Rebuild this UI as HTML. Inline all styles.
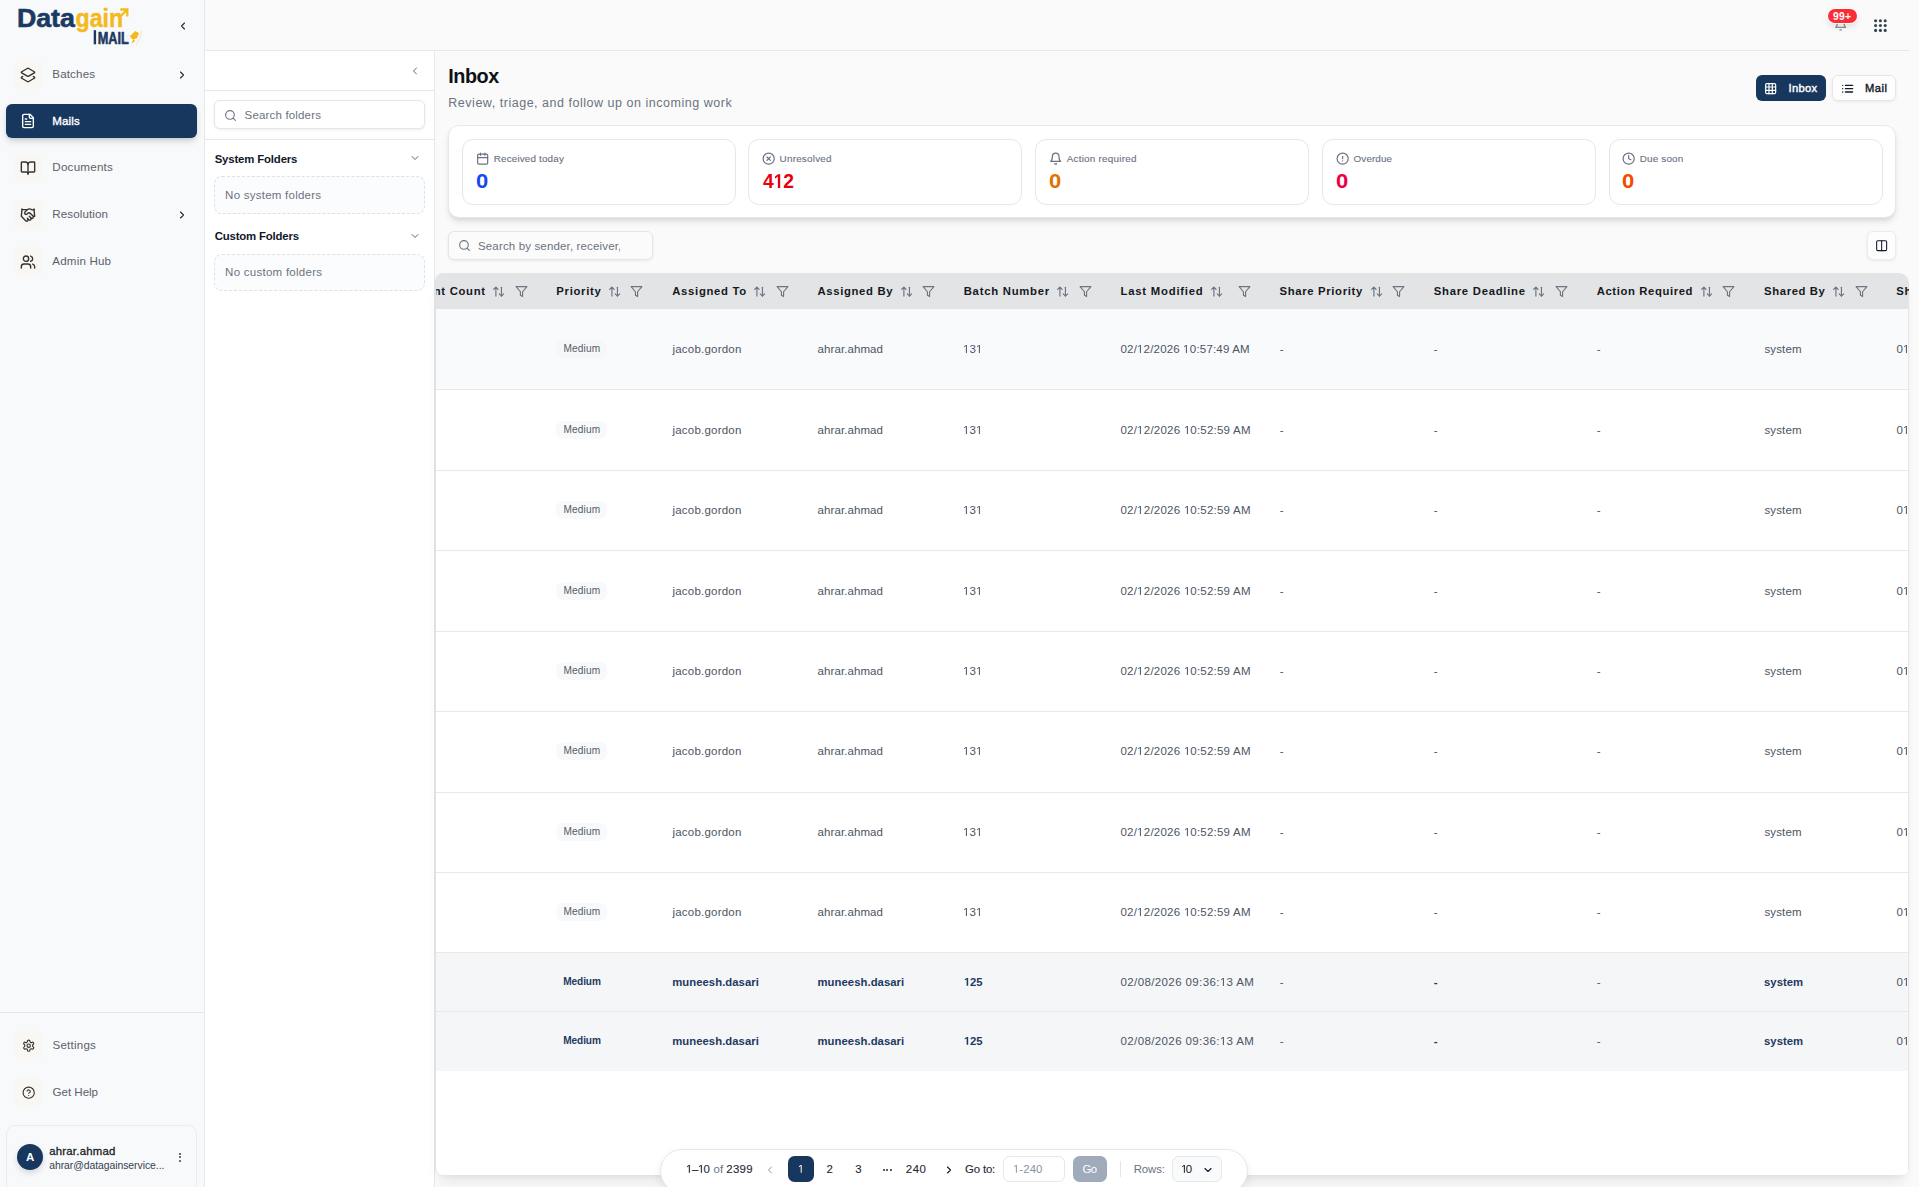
<!DOCTYPE html>
<html lang="en"><head><meta charset="utf-8"><title>Inbox - Datagain IMAIL</title>
<style>
html,body{margin:0;padding:0;}
body{width:1919px;height:1187px;overflow:hidden;position:relative;background:#fafafa;font-family:"Liberation Sans",sans-serif;}
.b,.t,.i{position:absolute;box-sizing:border-box;}
.t{white-space:nowrap;display:block;}
.i{display:block;overflow:visible;}
</style></head><body>
<div class="b" style="left:0.00px;top:0.00px;width:1919.00px;height:1187.00px;background:#fafafa;"></div>
<div class="b" style="left:205.00px;top:50.00px;width:1704.00px;height:1.00px;background:#e7e7e8;"></div>
<div class="b" style="left:0.00px;top:0.00px;width:204.00px;height:1187.00px;background:#f8f9fb;border-right:1px solid #e7e7e7;box-sizing:content-box;"></div>
<div class="b" style="left:205.00px;top:51.00px;width:229.00px;height:1136.00px;background:#fff;border-right:1px solid #e7e7e7;box-sizing:content-box;"></div>
<svg class="i" style="left:14px;top:4px" width="134" height="44" viewBox="14 4 134 44">
<g font-family="Liberation Sans, sans-serif" font-weight="700" stroke-linejoin="round">
<text x="16.9" y="26.7" font-size="25.6" fill="#1b3a63" stroke="#1b3a63" stroke-width=".6" textLength="58" lengthAdjust="spacingAndGlyphs">Data</text>
<text x="75.6" y="26.7" font-size="25.6" fill="#f5b91e" stroke="#f5b91e" stroke-width=".45" textLength="47.6" lengthAdjust="spacingAndGlyphs">gain</text>
<rect x="93.7" y="30.2" width="2.4" height="14.1" fill="#1b3a63"/>
<text x="97.7" y="44.3" font-size="17" fill="#1b3a63" stroke="#1b3a63" stroke-width=".6" textLength="31.1" lengthAdjust="spacingAndGlyphs">MAIL</text>
</g>
<path d="M120.3 9.5h7v7M127 9.8l-6.4 6.4" stroke="#f5b91e" stroke-width="2.3" fill="none"/>
<path d="M129.9 36.2l5.4-5.3 3.8 2.4-2.2 5-3.2 1 1.4 1.6-3.6 2.9 1.6-4.4-1.2-.6z" fill="#f2b81c"/>
<path d="M141.8 31.3l-2 7.2-3.6 6" stroke="#f5c84e" stroke-width=".6" fill="none" opacity=".7"/>
<path d="M126.6 36.4l2.6-.9M127.6 39.2l1.8-.4" stroke="#f5c84e" stroke-width=".6" fill="none" opacity=".6"/>
</svg>
<svg class="i" style="left:177.00px;top:19.60px;" width="12" height="12" viewBox="0 0 24 24" fill="none" stroke="#1f2937" stroke-width="2.2" stroke-linecap="round" stroke-linejoin="round"><path d="m15 18-6-6 6-6"/></svg>
<div class="b" style="left:14.00px;top:59.90px;width:29.00px;height:29.00px;background:#f9f7f3;border-radius:6.5px;"></div>
<svg class="i" style="left:20.00px;top:66.70px;" width="16" height="16" viewBox="0 0 24 24" fill="none" stroke="#333" stroke-width="2.1" stroke-linecap="round" stroke-linejoin="round"><path d="m20 14.285 1.5.845a1 1 0 0 1 0 1.74L13 21.74a2 2 0 0 1-2 0l-8.5-4.87a1 1 0 0 1 0-1.74l1.5-.845"/><path d="M13 13.74a2 2 0 0 1-2 0L2.5 8.87a1 1 0 0 1 0-1.74L11 2.26a2 2 0 0 1 2 0l8.5 4.87a1 1 0 0 1 0 1.74Z"/></svg>
<span class="t" style="left:52.30px;top:66.00px;font-size:11.6px;line-height:16px;color:#5b616b;letter-spacing:0.141px;">Batches</span>
<svg class="i" style="left:176.30px;top:68.70px;" width="12" height="12" viewBox="0 0 24 24" fill="none" stroke="#1f2937" stroke-width="2.2" stroke-linecap="round" stroke-linejoin="round"><path d="m9 18 6-6-6-6"/></svg>
<div class="b" style="left:6.00px;top:104.00px;width:191.00px;height:34.00px;background:#17375e;border-radius:6px;box-shadow:0 4px 7px -1px rgba(0,0,0,.16),0 2px 4px -2px rgba(0,0,0,.1);"></div>
<svg class="i" style="left:20.00px;top:113.20px;" width="16" height="16" viewBox="0 0 24 24" fill="none" stroke="#fff" stroke-width="2.1" stroke-linecap="round" stroke-linejoin="round"><path d="M15 2H6a2 2 0 0 0-2 2v16a2 2 0 0 0 2 2h12a2 2 0 0 0 2-2V7Z"/><path d="M14 2v4a2 2 0 0 0 2 2h4"/><path d="M10 9H8"/><path d="M16 13H8"/><path d="M16 17H8"/></svg>
<span class="t" style="left:52.30px;top:113.00px;font-size:11.5px;line-height:16px;color:#fff;letter-spacing:0.132px;-webkit-text-stroke:0.38px #fff;">Mails</span>
<div class="b" style="left:14.00px;top:154.10px;width:29.00px;height:28.00px;background:#f9f7f3;border-radius:6.5px;"></div>
<svg class="i" style="left:20.00px;top:159.90px;" width="16" height="16" viewBox="0 0 24 24" fill="none" stroke="#333" stroke-width="2.1" stroke-linecap="round" stroke-linejoin="round"><path d="M12 7v14"/><path d="M3 18a1 1 0 0 1-1-1V4a1 1 0 0 1 1-1h5a4 4 0 0 1 4 4 4 4 0 0 1 4-4h5a1 1 0 0 1 1 1v13a1 1 0 0 1-1 1h-6a3 3 0 0 0-3 3 3 3 0 0 0-3-3z"/></svg>
<span class="t" style="left:52.30px;top:159.00px;font-size:11.6px;line-height:16px;color:#5b616b;letter-spacing:0.242px;">Documents</span>
<div class="b" style="left:14.00px;top:199.90px;width:29.00px;height:29.00px;background:#f9f7f3;border-radius:6.5px;"></div>
<svg class="i" style="left:20.00px;top:206.70px;" width="16" height="16" viewBox="0 0 24 24" fill="none" stroke="#333" stroke-width="2.1" stroke-linecap="round" stroke-linejoin="round"><path d="m11 17 2 2a1 1 0 1 0 3-3"/><path d="m14 14 2.5 2.5a1 1 0 1 0 3-3l-3.88-3.88a3 3 0 0 0-4.24 0l-.88.88a1 1 0 1 1-3-3l2.81-2.81a5.79 5.79 0 0 1 7.06-.87l.47.28a2 2 0 0 0 1.42.25L21 4"/><path d="m21 3 1 11h-2"/><path d="M3 3 2 14l6.5 6.5a1 1 0 1 0 3-3"/><path d="M3 4h8"/></svg>
<span class="t" style="left:52.30px;top:206.00px;font-size:11.6px;line-height:16px;color:#5b616b;letter-spacing:0.088px;">Resolution</span>
<svg class="i" style="left:176.30px;top:208.70px;" width="12" height="12" viewBox="0 0 24 24" fill="none" stroke="#1f2937" stroke-width="2.2" stroke-linecap="round" stroke-linejoin="round"><path d="m9 18 6-6-6-6"/></svg>
<div class="b" style="left:14.00px;top:246.50px;width:29.00px;height:29.00px;background:#f9f7f3;border-radius:6.5px;"></div>
<svg class="i" style="left:20.00px;top:254.30px;" width="16" height="16" viewBox="0 0 24 24" fill="none" stroke="#333" stroke-width="2.1" stroke-linecap="round" stroke-linejoin="round"><path d="M16 21v-2a4 4 0 0 0-4-4H6a4 4 0 0 0-4 4v2"/><circle cx="9" cy="7" r="4"/><path d="M22 21v-2a4 4 0 0 0-3-3.87"/><path d="M16 3.13a4 4 0 0 1 0 7.75"/></svg>
<span class="t" style="left:52.30px;top:253.00px;font-size:11.6px;line-height:16px;color:#5b616b;letter-spacing:0.170px;">Admin Hub</span>
<div class="b" style="left:0.00px;top:1012.00px;width:204.00px;height:1.00px;background:#e7e7e8;"></div>
<div class="b" style="left:14.00px;top:1030.80px;width:29.00px;height:29.00px;background:#f9f7f3;border-radius:6.5px;"></div>
<svg class="i" style="left:21.60px;top:1038.80px;" width="13.4" height="13.4" viewBox="0 0 24 24" fill="none" stroke="#333" stroke-width="2.0" stroke-linecap="round" stroke-linejoin="round"><path d="M12.22 2h-.44a2 2 0 0 0-2 2v.18a2 2 0 0 1-1 1.73l-.43.25a2 2 0 0 1-2 0l-.15-.08a2 2 0 0 0-2.73.73l-.22.38a2 2 0 0 0 .73 2.73l.15.1a2 2 0 0 1 1 1.72v.51a2 2 0 0 1-1 1.74l-.15.09a2 2 0 0 0-.73 2.73l.22.38a2 2 0 0 0 2.73.73l.15-.08a2 2 0 0 1 2 0l.43.25a2 2 0 0 1 1 1.73V20a2 2 0 0 0 2 2h.44a2 2 0 0 0 2-2v-.18a2 2 0 0 1 1-1.73l.43-.25a2 2 0 0 1 2 0l.15.08a2 2 0 0 0 2.73-.73l.22-.39a2 2 0 0 0-.73-2.73l-.15-.08a2 2 0 0 1-1-1.74v-.5a2 2 0 0 1 1-1.74l.15-.09a2 2 0 0 0 .73-2.73l-.22-.38a2 2 0 0 0-2.73-.73l-.15.08a2 2 0 0 1-2 0l-.43-.25a2 2 0 0 1-1-1.73V4a2 2 0 0 0-2-2z"/><circle cx="12" cy="12" r="3"/></svg>
<span class="t" style="left:52.50px;top:1037.00px;font-size:11.6px;line-height:16px;color:#5b616b;letter-spacing:0.214px;">Settings</span>
<div class="b" style="left:14.00px;top:1077.80px;width:29.00px;height:29.00px;background:#f9f7f3;border-radius:6.5px;"></div>
<svg class="i" style="left:21.60px;top:1085.80px;" width="13.4" height="13.4" viewBox="0 0 24 24" fill="none" stroke="#333" stroke-width="2.0" stroke-linecap="round" stroke-linejoin="round"><circle cx="12" cy="12" r="10"/><path d="M9.09 9a3 3 0 0 1 5.83 1c0 2-3 3-3 3"/><path d="M12 17h.01"/></svg>
<span class="t" style="left:52.50px;top:1084.00px;font-size:11.6px;line-height:16px;color:#5b616b;letter-spacing:-0.027px;">Get Help</span>
<div class="b" style="left:6.30px;top:1125.30px;width:190.30px;height:80.00px;border:1px solid #ececee;border-radius:9px;"></div>
<div class="b" style="left:16.90px;top:1143.90px;width:26.50px;height:26.50px;background:#17375e;border-radius:50%;box-shadow:0 3px 6px rgba(0,0,0,.14);"></div>
<span class="t" style="left:30.15px;top:1149.00px;font-size:11.5px;line-height:16px;color:#fff;font-weight:700;transform:translateX(-50%);">A</span>
<span class="t" style="left:49.20px;top:1143.00px;font-size:11.4px;line-height:16px;color:#1a1d23;letter-spacing:0.219px;-webkit-text-stroke:0.3px #1a1d23;">ahrar.ahmad</span>
<span class="t" style="left:49.20px;top:1157.00px;font-size:10.4px;line-height:17px;color:#374151;letter-spacing:-0.046px;">ahrar@datagainservice...</span>
<div class="b" style="left:179.35px;top:1152.55px;width:2.10px;height:2.10px;background:#404040;border-radius:50%;"></div>
<div class="b" style="left:179.35px;top:1156.35px;width:2.10px;height:2.10px;background:#404040;border-radius:50%;"></div>
<div class="b" style="left:179.35px;top:1160.15px;width:2.10px;height:2.10px;background:#404040;border-radius:50%;"></div>
<div class="b" style="left:205.00px;top:90.00px;width:229.00px;height:1.00px;background:#e7e7e8;"></div>
<svg class="i" style="left:409.00px;top:64.90px;" width="12" height="12" viewBox="0 0 24 24" fill="none" stroke="#4b5563" stroke-width="1.8" stroke-linecap="round" stroke-linejoin="round"><path d="m15 18-6-6 6-6"/></svg>
<div class="b" style="left:214.40px;top:100.20px;width:210.30px;height:28.80px;background:#fff;border:1px solid #e6e6e7;border-radius:6px;box-shadow:0 1px 3px rgba(0,0,0,.07);"></div>
<svg class="i" style="left:224.00px;top:108.70px;" width="13" height="13" viewBox="0 0 24 24" fill="none" stroke="#6a7282" stroke-width="2.0" stroke-linecap="round" stroke-linejoin="round"><circle cx="11" cy="11" r="8"/><path d="m21 21-4.3-4.3"/></svg>
<span class="t" style="left:244.60px;top:107.00px;font-size:11.5px;line-height:16px;color:#6b7280;letter-spacing:0.166px;">Search folders</span>
<div class="b" style="left:205.00px;top:139.00px;width:229.00px;height:1.00px;background:#e7e7e8;"></div>
<span class="t" style="left:214.70px;top:151.00px;font-size:11.4px;line-height:16px;color:#111827;font-weight:700;letter-spacing:-0.162px;">System Folders</span>
<svg class="i" style="left:409.20px;top:152.30px;" width="12" height="12" viewBox="0 0 24 24" fill="none" stroke="#4b5563" stroke-width="1.8" stroke-linecap="round" stroke-linejoin="round"><path d="m6 9 6 6 6-6"/></svg>
<div class="b" style="left:214.40px;top:176.20px;width:210.30px;height:37.60px;background:#fbfcfd;border:1px dashed #dde1e6;border-radius:8px;"></div>
<span class="t" style="left:225.10px;top:187.00px;font-size:11.5px;line-height:16px;color:#6b7280;letter-spacing:0.248px;">No system folders</span>
<span class="t" style="left:214.70px;top:228.00px;font-size:11.4px;line-height:16px;color:#111827;font-weight:700;letter-spacing:-0.176px;">Custom Folders</span>
<svg class="i" style="left:409.20px;top:230.30px;" width="12" height="12" viewBox="0 0 24 24" fill="none" stroke="#4b5563" stroke-width="1.8" stroke-linecap="round" stroke-linejoin="round"><path d="m6 9 6 6 6-6"/></svg>
<div class="b" style="left:214.40px;top:254.00px;width:210.30px;height:36.60px;background:#fbfcfd;border:1px dashed #dde1e6;border-radius:8px;"></div>
<span class="t" style="left:225.10px;top:264.00px;font-size:11.5px;line-height:16px;color:#6b7280;letter-spacing:0.263px;">No custom folders</span>
<svg class="i" style="left:1833.74px;top:18.44px;" width="13.33" height="13.33" viewBox="0 0 24 24" fill="none" stroke="#8c8c8c" stroke-width="2.1" stroke-linecap="round" stroke-linejoin="round"><path d="M6 8a6 6 0 0 1 12 0c0 7 3 9 3 9H3s3-2 3-9"/><path d="M10.7 21.4h2.6"/></svg>
<div class="b" style="left:1827.90px;top:8.80px;width:29.20px;height:14.40px;background:#fb2c36;border-radius:8px;box-shadow:0 0 0 1px rgba(255,255,255,.85),0 3px 7px rgba(0,0,0,.13);"></div>
<span class="t" style="left:1832.90px;top:10.00px;font-size:10.3px;line-height:13px;color:#fff;font-weight:700;letter-spacing:0.308px;">99+</span>
<svg class="i" style="left:1872px;top:17px" width="17" height="17" viewBox="1872 17 17 17"><circle cx="1875.6" cy="20.7" r="1.55" fill="#364153"/><circle cx="1875.6" cy="25.55" r="1.55" fill="#364153"/><circle cx="1875.6" cy="30.4" r="1.55" fill="#364153"/><circle cx="1880.4" cy="20.7" r="1.55" fill="#364153"/><circle cx="1880.4" cy="25.55" r="1.55" fill="#364153"/><circle cx="1880.4" cy="30.4" r="1.55" fill="#364153"/><circle cx="1885.2" cy="20.7" r="1.55" fill="#364153"/><circle cx="1885.2" cy="25.55" r="1.55" fill="#364153"/><circle cx="1885.2" cy="30.4" r="1.55" fill="#364153"/></svg>
<span class="t" style="left:448.30px;top:63.00px;font-size:19.8px;line-height:26px;color:#0f1115;font-weight:700;letter-spacing:-0.479px;">Inbox</span>
<span class="t" style="left:448.30px;top:95.00px;font-size:12.5px;line-height:16px;color:#6b7280;letter-spacing:0.522px;">Review, triage, and follow up on incoming work</span>
<div class="b" style="left:1756.00px;top:74.90px;width:70.00px;height:26.00px;background:#17375e;border-radius:6px;"></div>
<svg class="i" style="left:1763.85px;top:81.55px;" width="13.3" height="13.3" viewBox="0 0 24 24" fill="none" stroke="#fff" stroke-width="2.2" stroke-linecap="round" stroke-linejoin="round"><rect width="18" height="18" x="3" y="3" rx="2"/><path d="M3 9h18"/><path d="M3 15h18"/><path d="M9 3v18"/><path d="M15 3v18"/></svg>
<span class="t" style="left:1788.50px;top:80.00px;font-size:11.2px;line-height:16px;color:#fff;letter-spacing:0.297px;-webkit-text-stroke:0.4px #fff;">Inbox</span>
<div class="b" style="left:1832.40px;top:75.40px;width:63.50px;height:25.30px;background:#fdfdfd;border:1px solid #e7e7e8;border-radius:6px;box-shadow:0 1px 3px rgba(0,0,0,.07);"></div>
<svg class="i" style="left:1840.75px;top:81.55px;" width="13.3" height="13.3" viewBox="0 0 24 24" fill="none" stroke="#111827" stroke-width="2.4" stroke-linecap="round" stroke-linejoin="round"><path d="M3 12h.01"/><path d="M3 18h.01"/><path d="M3 6h.01"/><path d="M8 12h13"/><path d="M8 18h13"/><path d="M8 6h13"/></svg>
<span class="t" style="left:1865.00px;top:80.00px;font-size:11.2px;line-height:16px;color:#111827;letter-spacing:0.459px;-webkit-text-stroke:0.4px #111827;">Mail</span>
<div class="b" style="left:447.80px;top:124.80px;width:1448.20px;height:93.10px;background:#fff;border:1px solid #e8e9eb;border-radius:11px;box-shadow:0 4.4px 6.7px -1.1px rgba(0,0,0,.10),0 2.2px 4.4px -2.2px rgba(0,0,0,.10);"></div>
<div class="b" style="left:462.00px;top:138.90px;width:274.10px;height:66.10px;background:#fff;border:1px solid #e6e7ea;border-radius:11px;"></div>
<svg class="i" style="left:475.78px;top:151.74px;" width="13.33" height="13.33" viewBox="0 0 24 24" fill="none" stroke="#6a7282" stroke-width="2.15" stroke-linecap="round" stroke-linejoin="round"><path d="M8 2v4"/><path d="M16 2v4"/><rect width="18" height="18" x="3" y="4" rx="2"/><path d="M3 10h18"/></svg>
<span class="t" style="left:493.70px;top:151.00px;font-size:9.9px;line-height:15px;color:#6a7282;letter-spacing:0.159px;-webkit-text-stroke:0.12px #6a7282;">Received today</span>
<span class="t" style="left:476.20px;top:169.00px;font-size:19.3px;line-height:25px;color:#1549ee;font-weight:700;transform:scaleX(1.14);transform-origin:0 50%;">0</span>
<div class="b" style="left:747.90px;top:138.90px;width:274.10px;height:66.10px;background:#fff;border:1px solid #e6e7ea;border-radius:11px;"></div>
<svg class="i" style="left:761.69px;top:151.74px;" width="13.33" height="13.33" viewBox="0 0 24 24" fill="none" stroke="#6a7282" stroke-width="2.15" stroke-linecap="round" stroke-linejoin="round"><circle cx="12" cy="12" r="10"/><path d="m15 9-6 6"/><path d="m9 9 6 6"/></svg>
<span class="t" style="left:779.60px;top:151.00px;font-size:9.9px;line-height:15px;color:#6a7282;letter-spacing:0.215px;-webkit-text-stroke:0.12px #6a7282;">Unresolved</span>
<span class="t" style="left:763.10px;top:169.00px;font-size:19.3px;line-height:25px;color:#e7000b;font-weight:700;">4</span>
<svg class="i" style="left:773.30px;top:172px" width="10" height="18" viewBox="773.30 172 10 18"><path d="M778.14 188.00 L778.14 176.62 L775.30 178.68 L775.30 176.53 L778.27 174.30 L780.50 174.30 L780.50 188.00Z" fill="#e7000b"/></svg>
<span class="t" style="left:783.30px;top:169.00px;font-size:19.3px;line-height:25px;color:#e7000b;font-weight:700;">2</span>
<div class="b" style="left:1035.00px;top:138.90px;width:274.10px;height:66.10px;background:#fff;border:1px solid #e6e7ea;border-radius:11px;"></div>
<svg class="i" style="left:1048.79px;top:151.74px;" width="13.33" height="13.33" viewBox="0 0 24 24" fill="none" stroke="#6a7282" stroke-width="2.15" stroke-linecap="round" stroke-linejoin="round"><path d="M6 8a6 6 0 0 1 12 0c0 7 3 9 3 9H3s3-2 3-9"/><path d="M10.3 21a1.94 1.94 0 0 0 3.4 0"/></svg>
<span class="t" style="left:1066.70px;top:151.00px;font-size:9.9px;line-height:15px;color:#6a7282;letter-spacing:0.243px;-webkit-text-stroke:0.12px #6a7282;">Action required</span>
<span class="t" style="left:1049.20px;top:169.00px;font-size:19.3px;line-height:25px;color:#e17100;font-weight:700;transform:scaleX(1.14);transform-origin:0 50%;">0</span>
<div class="b" style="left:1321.90px;top:138.90px;width:274.10px;height:66.10px;background:#fff;border:1px solid #e6e7ea;border-radius:11px;"></div>
<svg class="i" style="left:1335.69px;top:151.74px;" width="13.33" height="13.33" viewBox="0 0 24 24" fill="none" stroke="#6a7282" stroke-width="2.15" stroke-linecap="round" stroke-linejoin="round"><circle cx="12" cy="12" r="10"/><path d="M12 8v4"/><path d="M12 16h.01"/></svg>
<span class="t" style="left:1353.60px;top:151.00px;font-size:9.9px;line-height:15px;color:#6a7282;letter-spacing:0.089px;-webkit-text-stroke:0.12px #6a7282;">Overdue</span>
<span class="t" style="left:1336.10px;top:169.00px;font-size:19.3px;line-height:25px;color:#ec003f;font-weight:700;transform:scaleX(1.14);transform-origin:0 50%;">0</span>
<div class="b" style="left:1608.90px;top:138.90px;width:274.10px;height:66.10px;background:#fff;border:1px solid #e6e7ea;border-radius:11px;"></div>
<svg class="i" style="left:1621.89px;top:151.74px;" width="13.33" height="13.33" viewBox="0 0 24 24" fill="none" stroke="#6a7282" stroke-width="2.15" stroke-linecap="round" stroke-linejoin="round"><circle cx="12" cy="12" r="10"/><path d="M12 6v6l4 2"/></svg>
<span class="t" style="left:1639.80px;top:151.00px;font-size:9.9px;line-height:15px;color:#6a7282;letter-spacing:0.161px;-webkit-text-stroke:0.12px #6a7282;">Due soon</span>
<span class="t" style="left:1622.30px;top:169.00px;font-size:19.3px;line-height:25px;color:#f54900;font-weight:700;transform:scaleX(1.14);transform-origin:0 50%;">0</span>
<div class="b" style="left:448.00px;top:231.20px;width:204.60px;height:28.90px;background:#fbfbfb;border:1px solid #e6e6e7;border-radius:6px;box-shadow:0 1px 3px rgba(0,0,0,.07);overflow:hidden;"></div>
<svg class="i" style="left:458.10px;top:239.10px;" width="13" height="13" viewBox="0 0 24 24" fill="none" stroke="#6a7282" stroke-width="2.0" stroke-linecap="round" stroke-linejoin="round"><circle cx="11" cy="11" r="8"/><path d="m21 21-4.3-4.3"/></svg>
<div class="b" style="left:470px;top:236px;width:150.4px;height:20px;overflow:hidden"><span class="t" style="left:8.00px;top:2.00px;font-size:11.5px;line-height:16px;color:#6b7280;letter-spacing:.15px;">Search by sender, receiver, subject</span></div>
<div class="b" style="left:1867.20px;top:231.00px;width:28.60px;height:28.60px;background:#fdfdfd;border:1px solid #ebecee;border-radius:6px;box-shadow:0 1px 3px rgba(0,0,0,.07);"></div>
<svg class="i" style="left:1874.85px;top:238.75px;" width="13.3" height="13.3" viewBox="0 0 24 24" fill="none" stroke="#111827" stroke-width="1.9" stroke-linecap="round" stroke-linejoin="round"><rect width="18" height="18" x="3" y="3" rx="2"/><path d="M12 3v18"/></svg>
<div class="b" style="left:435.0px;top:273px;width:1473.60px;height:901.80px;overflow:hidden;background:#fff;border-radius:8px 10px 7px 7px;border-left:1px solid #dfe0e3;box-shadow:0 11px 14px -5px rgba(0,0,0,.085),0 4px 6px -4px rgba(0,0,0,.06);">
<div class="b" style="left:0.00px;top:0.00px;width:1473.60px;height:35.80px;background:#e3e4e6;"></div>
<span class="t" style="left:-59.13px;top:10.00px;font-size:11.3px;line-height:16px;color:#16181d;font-weight:700;letter-spacing:0.68px;">Attachment Count</span>
<svg class="i" style="left:55.93px;top:11.59px;" width="13.33" height="13.33" viewBox="0 0 24 24" fill="none" stroke="#6e7481" stroke-width="2.1" stroke-linecap="round" stroke-linejoin="round"><path d="m21 16-4 4-4-4"/><path d="M17 20V4"/><path d="m3 8 4-4 4 4"/><path d="M7 4v16"/></svg>
<svg class="i" style="left:79.00px;top:11.90px;" width="13.0" height="13.0" viewBox="0 0 24 24" fill="none" stroke="#6e7481" stroke-width="2.1" stroke-linecap="round" stroke-linejoin="round"><path d="M22 3H2l8 9.46V19l4 2v-8.54L22 3z"/></svg>
<span class="t" style="left:120.30px;top:10.00px;font-size:11.3px;line-height:16px;color:#16181d;font-weight:700;letter-spacing:0.707px;">Priority</span>
<svg class="i" style="left:171.74px;top:11.59px;" width="13.33" height="13.33" viewBox="0 0 24 24" fill="none" stroke="#6e7481" stroke-width="2.1" stroke-linecap="round" stroke-linejoin="round"><path d="m21 16-4 4-4-4"/><path d="M17 20V4"/><path d="m3 8 4-4 4 4"/><path d="M7 4v16"/></svg>
<svg class="i" style="left:193.80px;top:11.90px;" width="13.0" height="13.0" viewBox="0 0 24 24" fill="none" stroke="#6e7481" stroke-width="2.1" stroke-linecap="round" stroke-linejoin="round"><path d="M22 3H2l8 9.46V19l4 2v-8.54L22 3z"/></svg>
<span class="t" style="left:236.20px;top:10.00px;font-size:11.3px;line-height:16px;color:#16181d;font-weight:700;letter-spacing:0.712px;">Assigned To</span>
<svg class="i" style="left:317.03px;top:11.59px;" width="13.33" height="13.33" viewBox="0 0 24 24" fill="none" stroke="#6e7481" stroke-width="2.1" stroke-linecap="round" stroke-linejoin="round"><path d="m21 16-4 4-4-4"/><path d="M17 20V4"/><path d="m3 8 4-4 4 4"/><path d="M7 4v16"/></svg>
<svg class="i" style="left:340.00px;top:11.90px;" width="13.0" height="13.0" viewBox="0 0 24 24" fill="none" stroke="#6e7481" stroke-width="2.1" stroke-linecap="round" stroke-linejoin="round"><path d="M22 3H2l8 9.46V19l4 2v-8.54L22 3z"/></svg>
<span class="t" style="left:381.50px;top:10.00px;font-size:11.3px;line-height:16px;color:#16181d;font-weight:700;letter-spacing:0.655px;">Assigned By</span>
<svg class="i" style="left:463.83px;top:11.59px;" width="13.33" height="13.33" viewBox="0 0 24 24" fill="none" stroke="#6e7481" stroke-width="2.1" stroke-linecap="round" stroke-linejoin="round"><path d="m21 16-4 4-4-4"/><path d="M17 20V4"/><path d="m3 8 4-4 4 4"/><path d="M7 4v16"/></svg>
<svg class="i" style="left:485.80px;top:11.90px;" width="13.0" height="13.0" viewBox="0 0 24 24" fill="none" stroke="#6e7481" stroke-width="2.1" stroke-linecap="round" stroke-linejoin="round"><path d="M22 3H2l8 9.46V19l4 2v-8.54L22 3z"/></svg>
<span class="t" style="left:527.70px;top:10.00px;font-size:11.3px;line-height:16px;color:#16181d;font-weight:700;letter-spacing:0.751px;">Batch Number</span>
<svg class="i" style="left:619.94px;top:11.59px;" width="13.33" height="13.33" viewBox="0 0 24 24" fill="none" stroke="#6e7481" stroke-width="2.1" stroke-linecap="round" stroke-linejoin="round"><path d="m21 16-4 4-4-4"/><path d="M17 20V4"/><path d="m3 8 4-4 4 4"/><path d="M7 4v16"/></svg>
<svg class="i" style="left:643.00px;top:11.90px;" width="13.0" height="13.0" viewBox="0 0 24 24" fill="none" stroke="#6e7481" stroke-width="2.1" stroke-linecap="round" stroke-linejoin="round"><path d="M22 3H2l8 9.46V19l4 2v-8.54L22 3z"/></svg>
<span class="t" style="left:684.50px;top:10.00px;font-size:11.3px;line-height:16px;color:#16181d;font-weight:700;letter-spacing:0.789px;">Last Modified</span>
<svg class="i" style="left:773.94px;top:11.59px;" width="13.33" height="13.33" viewBox="0 0 24 24" fill="none" stroke="#6e7481" stroke-width="2.1" stroke-linecap="round" stroke-linejoin="round"><path d="m21 16-4 4-4-4"/><path d="M17 20V4"/><path d="m3 8 4-4 4 4"/><path d="M7 4v16"/></svg>
<svg class="i" style="left:801.90px;top:11.90px;" width="13.0" height="13.0" viewBox="0 0 24 24" fill="none" stroke="#6e7481" stroke-width="2.1" stroke-linecap="round" stroke-linejoin="round"><path d="M22 3H2l8 9.46V19l4 2v-8.54L22 3z"/></svg>
<span class="t" style="left:843.50px;top:10.00px;font-size:11.3px;line-height:16px;color:#16181d;font-weight:700;letter-spacing:0.662px;">Share Priority</span>
<svg class="i" style="left:933.74px;top:11.59px;" width="13.33" height="13.33" viewBox="0 0 24 24" fill="none" stroke="#6e7481" stroke-width="2.1" stroke-linecap="round" stroke-linejoin="round"><path d="m21 16-4 4-4-4"/><path d="M17 20V4"/><path d="m3 8 4-4 4 4"/><path d="M7 4v16"/></svg>
<svg class="i" style="left:956.20px;top:11.90px;" width="13.0" height="13.0" viewBox="0 0 24 24" fill="none" stroke="#6e7481" stroke-width="2.1" stroke-linecap="round" stroke-linejoin="round"><path d="M22 3H2l8 9.46V19l4 2v-8.54L22 3z"/></svg>
<span class="t" style="left:997.80px;top:10.00px;font-size:11.3px;line-height:16px;color:#16181d;font-weight:700;letter-spacing:0.735px;">Share Deadline</span>
<svg class="i" style="left:1096.04px;top:11.59px;" width="13.33" height="13.33" viewBox="0 0 24 24" fill="none" stroke="#6e7481" stroke-width="2.1" stroke-linecap="round" stroke-linejoin="round"><path d="m21 16-4 4-4-4"/><path d="M17 20V4"/><path d="m3 8 4-4 4 4"/><path d="M7 4v16"/></svg>
<svg class="i" style="left:1118.70px;top:11.90px;" width="13.0" height="13.0" viewBox="0 0 24 24" fill="none" stroke="#6e7481" stroke-width="2.1" stroke-linecap="round" stroke-linejoin="round"><path d="M22 3H2l8 9.46V19l4 2v-8.54L22 3z"/></svg>
<span class="t" style="left:1160.70px;top:10.00px;font-size:11.3px;line-height:16px;color:#16181d;font-weight:700;letter-spacing:0.610px;">Action Required</span>
<svg class="i" style="left:1264.04px;top:11.59px;" width="13.33" height="13.33" viewBox="0 0 24 24" fill="none" stroke="#6e7481" stroke-width="2.1" stroke-linecap="round" stroke-linejoin="round"><path d="m21 16-4 4-4-4"/><path d="M17 20V4"/><path d="m3 8 4-4 4 4"/><path d="M7 4v16"/></svg>
<svg class="i" style="left:1286.20px;top:11.90px;" width="13.0" height="13.0" viewBox="0 0 24 24" fill="none" stroke="#6e7481" stroke-width="2.1" stroke-linecap="round" stroke-linejoin="round"><path d="M22 3H2l8 9.46V19l4 2v-8.54L22 3z"/></svg>
<span class="t" style="left:1328.10px;top:10.00px;font-size:11.3px;line-height:16px;color:#16181d;font-weight:700;letter-spacing:0.612px;">Shared By</span>
<svg class="i" style="left:1395.94px;top:11.59px;" width="13.33" height="13.33" viewBox="0 0 24 24" fill="none" stroke="#6e7481" stroke-width="2.1" stroke-linecap="round" stroke-linejoin="round"><path d="m21 16-4 4-4-4"/><path d="M17 20V4"/><path d="m3 8 4-4 4 4"/><path d="M7 4v16"/></svg>
<svg class="i" style="left:1419.00px;top:11.90px;" width="13.0" height="13.0" viewBox="0 0 24 24" fill="none" stroke="#6e7481" stroke-width="2.1" stroke-linecap="round" stroke-linejoin="round"><path d="M22 3H2l8 9.46V19l4 2v-8.54L22 3z"/></svg>
<span class="t" style="left:1460.30px;top:10.00px;font-size:11.3px;line-height:16px;color:#16181d;font-weight:700;letter-spacing:.68px;">Shared To</span>
<div class="b" style="left:0.00px;top:36.00px;width:1473.60px;height:80.00px;background:#f9fafc;"></div>
<div class="b" style="left:0.00px;top:116.00px;width:1473.60px;height:1.00px;background:#e7e8ea;"></div>
<div class="b" style="left:120.20px;top:67.00px;width:50.60px;height:18.00px;background:#f6f7f8;border-radius:7px;"></div>
<span class="t" style="left:127.60px;top:68.00px;font-size:10.1px;line-height:15px;color:#555b66;letter-spacing:0.114px;">Medium</span>
<span class="t" style="left:236.49px;top:68.00px;font-size:11.5px;line-height:16px;color:#4b5563;letter-spacing:0.210px;">jacob.gordon</span>
<span class="t" style="left:381.50px;top:68.00px;font-size:11.5px;line-height:16px;color:#4b5563;letter-spacing:0.093px;">ahrar.ahmad</span>
<span class="t" style="left:527.00px;top:68.00px;font-size:11.5px;line-height:16px;color:#4b5563;letter-spacing:-.1px;"><svg width="6.40" height="7.91" viewBox="0 0 6.40 7.91" style="display:inline-block;vertical-align:baseline;overflow:visible;"><path d="M2.89 7.91L2.89 0.97L1.11 2.24L1.11 1.29L2.98 0.00L3.91 0.00L3.91 7.91Z" fill="#4b5563"/></svg>3<svg width="6.40" height="7.91" viewBox="0 0 6.40 7.91" style="display:inline-block;vertical-align:baseline;overflow:visible;"><path d="M2.89 7.91L2.89 0.97L1.11 2.24L1.11 1.29L2.98 0.00L3.91 0.00L3.91 7.91Z" fill="#4b5563"/></svg></span>
<span class="t" style="left:684.50px;top:68.00px;font-size:11.5px;line-height:16px;color:#4b5563;letter-spacing:0.185px;">02/<svg width="6.40" height="7.91" viewBox="0 0 6.40 7.91" style="display:inline-block;vertical-align:baseline;overflow:visible;margin-right:0.185px;"><path d="M2.89 7.91L2.89 0.97L1.11 2.24L1.11 1.29L2.98 0.00L3.91 0.00L3.91 7.91Z" fill="#4b5563"/></svg>2/2026 <svg width="6.40" height="7.91" viewBox="0 0 6.40 7.91" style="display:inline-block;vertical-align:baseline;overflow:visible;margin-right:0.185px;"><path d="M2.89 7.91L2.89 0.97L1.11 2.24L1.11 1.29L2.98 0.00L3.91 0.00L3.91 7.91Z" fill="#4b5563"/></svg>0:57:49 AM</span>
<span class="t" style="left:843.70px;top:68.00px;font-size:11.5px;line-height:16px;color:#4b5563;">-</span>
<span class="t" style="left:997.80px;top:68.00px;font-size:11.5px;line-height:16px;color:#4b5563;">-</span>
<span class="t" style="left:1160.70px;top:68.00px;font-size:11.5px;line-height:16px;color:#4b5563;">-</span>
<span class="t" style="left:1328.50px;top:68.00px;font-size:11.5px;line-height:16px;color:#4b5563;letter-spacing:0.115px;">system</span>
<span class="t" style="left:1460.60px;top:68.00px;font-size:11.5px;line-height:16px;color:#4b5563;letter-spacing:.4px;">0<svg width="6.40" height="7.91" viewBox="0 0 6.40 7.91" style="display:inline-block;vertical-align:baseline;overflow:visible;"><path d="M2.89 7.91L2.89 0.97L1.11 2.24L1.11 1.29L2.98 0.00L3.91 0.00L3.91 7.91Z" fill="#4b5563"/></svg>/</span>
<div class="b" style="left:0.00px;top:197.00px;width:1473.60px;height:1.00px;background:#e7e8ea;"></div>
<div class="b" style="left:120.20px;top:148.00px;width:50.60px;height:18.00px;background:#f8f9fa;border-radius:7px;"></div>
<span class="t" style="left:127.60px;top:149.00px;font-size:10.1px;line-height:15px;color:#555b66;letter-spacing:0.114px;">Medium</span>
<span class="t" style="left:236.49px;top:149.00px;font-size:11.5px;line-height:16px;color:#4b5563;letter-spacing:0.210px;">jacob.gordon</span>
<span class="t" style="left:381.50px;top:149.00px;font-size:11.5px;line-height:16px;color:#4b5563;letter-spacing:0.093px;">ahrar.ahmad</span>
<span class="t" style="left:527.00px;top:149.00px;font-size:11.5px;line-height:16px;color:#4b5563;letter-spacing:-.1px;"><svg width="6.40" height="7.91" viewBox="0 0 6.40 7.91" style="display:inline-block;vertical-align:baseline;overflow:visible;"><path d="M2.89 7.91L2.89 0.97L1.11 2.24L1.11 1.29L2.98 0.00L3.91 0.00L3.91 7.91Z" fill="#4b5563"/></svg>3<svg width="6.40" height="7.91" viewBox="0 0 6.40 7.91" style="display:inline-block;vertical-align:baseline;overflow:visible;"><path d="M2.89 7.91L2.89 0.97L1.11 2.24L1.11 1.29L2.98 0.00L3.91 0.00L3.91 7.91Z" fill="#4b5563"/></svg></span>
<span class="t" style="left:684.50px;top:149.00px;font-size:11.5px;line-height:16px;color:#4b5563;letter-spacing:0.223px;">02/<svg width="6.40" height="7.91" viewBox="0 0 6.40 7.91" style="display:inline-block;vertical-align:baseline;overflow:visible;margin-right:0.223px;"><path d="M2.89 7.91L2.89 0.97L1.11 2.24L1.11 1.29L2.98 0.00L3.91 0.00L3.91 7.91Z" fill="#4b5563"/></svg>2/2026 <svg width="6.40" height="7.91" viewBox="0 0 6.40 7.91" style="display:inline-block;vertical-align:baseline;overflow:visible;margin-right:0.223px;"><path d="M2.89 7.91L2.89 0.97L1.11 2.24L1.11 1.29L2.98 0.00L3.91 0.00L3.91 7.91Z" fill="#4b5563"/></svg>0:52:59 AM</span>
<span class="t" style="left:843.70px;top:149.00px;font-size:11.5px;line-height:16px;color:#4b5563;">-</span>
<span class="t" style="left:997.80px;top:149.00px;font-size:11.5px;line-height:16px;color:#4b5563;">-</span>
<span class="t" style="left:1160.70px;top:149.00px;font-size:11.5px;line-height:16px;color:#4b5563;">-</span>
<span class="t" style="left:1328.50px;top:149.00px;font-size:11.5px;line-height:16px;color:#4b5563;letter-spacing:0.115px;">system</span>
<span class="t" style="left:1460.60px;top:149.00px;font-size:11.5px;line-height:16px;color:#4b5563;letter-spacing:.4px;">0<svg width="6.40" height="7.91" viewBox="0 0 6.40 7.91" style="display:inline-block;vertical-align:baseline;overflow:visible;"><path d="M2.89 7.91L2.89 0.97L1.11 2.24L1.11 1.29L2.98 0.00L3.91 0.00L3.91 7.91Z" fill="#4b5563"/></svg>/</span>
<div class="b" style="left:0.00px;top:277.00px;width:1473.60px;height:1.00px;background:#e7e8ea;"></div>
<div class="b" style="left:120.20px;top:228.00px;width:50.60px;height:18.00px;background:#f8f9fa;border-radius:7px;"></div>
<span class="t" style="left:127.60px;top:229.00px;font-size:10.1px;line-height:15px;color:#555b66;letter-spacing:0.114px;">Medium</span>
<span class="t" style="left:236.49px;top:229.00px;font-size:11.5px;line-height:16px;color:#4b5563;letter-spacing:0.210px;">jacob.gordon</span>
<span class="t" style="left:381.50px;top:229.00px;font-size:11.5px;line-height:16px;color:#4b5563;letter-spacing:0.093px;">ahrar.ahmad</span>
<span class="t" style="left:527.00px;top:229.00px;font-size:11.5px;line-height:16px;color:#4b5563;letter-spacing:-.1px;"><svg width="6.40" height="7.91" viewBox="0 0 6.40 7.91" style="display:inline-block;vertical-align:baseline;overflow:visible;"><path d="M2.89 7.91L2.89 0.97L1.11 2.24L1.11 1.29L2.98 0.00L3.91 0.00L3.91 7.91Z" fill="#4b5563"/></svg>3<svg width="6.40" height="7.91" viewBox="0 0 6.40 7.91" style="display:inline-block;vertical-align:baseline;overflow:visible;"><path d="M2.89 7.91L2.89 0.97L1.11 2.24L1.11 1.29L2.98 0.00L3.91 0.00L3.91 7.91Z" fill="#4b5563"/></svg></span>
<span class="t" style="left:684.50px;top:229.00px;font-size:11.5px;line-height:16px;color:#4b5563;letter-spacing:0.223px;">02/<svg width="6.40" height="7.91" viewBox="0 0 6.40 7.91" style="display:inline-block;vertical-align:baseline;overflow:visible;margin-right:0.223px;"><path d="M2.89 7.91L2.89 0.97L1.11 2.24L1.11 1.29L2.98 0.00L3.91 0.00L3.91 7.91Z" fill="#4b5563"/></svg>2/2026 <svg width="6.40" height="7.91" viewBox="0 0 6.40 7.91" style="display:inline-block;vertical-align:baseline;overflow:visible;margin-right:0.223px;"><path d="M2.89 7.91L2.89 0.97L1.11 2.24L1.11 1.29L2.98 0.00L3.91 0.00L3.91 7.91Z" fill="#4b5563"/></svg>0:52:59 AM</span>
<span class="t" style="left:843.70px;top:229.00px;font-size:11.5px;line-height:16px;color:#4b5563;">-</span>
<span class="t" style="left:997.80px;top:229.00px;font-size:11.5px;line-height:16px;color:#4b5563;">-</span>
<span class="t" style="left:1160.70px;top:229.00px;font-size:11.5px;line-height:16px;color:#4b5563;">-</span>
<span class="t" style="left:1328.50px;top:229.00px;font-size:11.5px;line-height:16px;color:#4b5563;letter-spacing:0.115px;">system</span>
<span class="t" style="left:1460.60px;top:229.00px;font-size:11.5px;line-height:16px;color:#4b5563;letter-spacing:.4px;">0<svg width="6.40" height="7.91" viewBox="0 0 6.40 7.91" style="display:inline-block;vertical-align:baseline;overflow:visible;"><path d="M2.89 7.91L2.89 0.97L1.11 2.24L1.11 1.29L2.98 0.00L3.91 0.00L3.91 7.91Z" fill="#4b5563"/></svg>/</span>
<div class="b" style="left:0.00px;top:358.00px;width:1473.60px;height:1.00px;background:#e7e8ea;"></div>
<div class="b" style="left:120.20px;top:309.00px;width:50.60px;height:18.00px;background:#f8f9fa;border-radius:7px;"></div>
<span class="t" style="left:127.60px;top:310.00px;font-size:10.1px;line-height:15px;color:#555b66;letter-spacing:0.114px;">Medium</span>
<span class="t" style="left:236.49px;top:310.00px;font-size:11.5px;line-height:16px;color:#4b5563;letter-spacing:0.210px;">jacob.gordon</span>
<span class="t" style="left:381.50px;top:310.00px;font-size:11.5px;line-height:16px;color:#4b5563;letter-spacing:0.093px;">ahrar.ahmad</span>
<span class="t" style="left:527.00px;top:310.00px;font-size:11.5px;line-height:16px;color:#4b5563;letter-spacing:-.1px;"><svg width="6.40" height="7.91" viewBox="0 0 6.40 7.91" style="display:inline-block;vertical-align:baseline;overflow:visible;"><path d="M2.89 7.91L2.89 0.97L1.11 2.24L1.11 1.29L2.98 0.00L3.91 0.00L3.91 7.91Z" fill="#4b5563"/></svg>3<svg width="6.40" height="7.91" viewBox="0 0 6.40 7.91" style="display:inline-block;vertical-align:baseline;overflow:visible;"><path d="M2.89 7.91L2.89 0.97L1.11 2.24L1.11 1.29L2.98 0.00L3.91 0.00L3.91 7.91Z" fill="#4b5563"/></svg></span>
<span class="t" style="left:684.50px;top:310.00px;font-size:11.5px;line-height:16px;color:#4b5563;letter-spacing:0.223px;">02/<svg width="6.40" height="7.91" viewBox="0 0 6.40 7.91" style="display:inline-block;vertical-align:baseline;overflow:visible;margin-right:0.223px;"><path d="M2.89 7.91L2.89 0.97L1.11 2.24L1.11 1.29L2.98 0.00L3.91 0.00L3.91 7.91Z" fill="#4b5563"/></svg>2/2026 <svg width="6.40" height="7.91" viewBox="0 0 6.40 7.91" style="display:inline-block;vertical-align:baseline;overflow:visible;margin-right:0.223px;"><path d="M2.89 7.91L2.89 0.97L1.11 2.24L1.11 1.29L2.98 0.00L3.91 0.00L3.91 7.91Z" fill="#4b5563"/></svg>0:52:59 AM</span>
<span class="t" style="left:843.70px;top:310.00px;font-size:11.5px;line-height:16px;color:#4b5563;">-</span>
<span class="t" style="left:997.80px;top:310.00px;font-size:11.5px;line-height:16px;color:#4b5563;">-</span>
<span class="t" style="left:1160.70px;top:310.00px;font-size:11.5px;line-height:16px;color:#4b5563;">-</span>
<span class="t" style="left:1328.50px;top:310.00px;font-size:11.5px;line-height:16px;color:#4b5563;letter-spacing:0.115px;">system</span>
<span class="t" style="left:1460.60px;top:310.00px;font-size:11.5px;line-height:16px;color:#4b5563;letter-spacing:.4px;">0<svg width="6.40" height="7.91" viewBox="0 0 6.40 7.91" style="display:inline-block;vertical-align:baseline;overflow:visible;"><path d="M2.89 7.91L2.89 0.97L1.11 2.24L1.11 1.29L2.98 0.00L3.91 0.00L3.91 7.91Z" fill="#4b5563"/></svg>/</span>
<div class="b" style="left:0.00px;top:438.00px;width:1473.60px;height:1.00px;background:#e7e8ea;"></div>
<div class="b" style="left:120.20px;top:389.00px;width:50.60px;height:18.00px;background:#f8f9fa;border-radius:7px;"></div>
<span class="t" style="left:127.60px;top:390.00px;font-size:10.1px;line-height:15px;color:#555b66;letter-spacing:0.114px;">Medium</span>
<span class="t" style="left:236.49px;top:390.00px;font-size:11.5px;line-height:16px;color:#4b5563;letter-spacing:0.210px;">jacob.gordon</span>
<span class="t" style="left:381.50px;top:390.00px;font-size:11.5px;line-height:16px;color:#4b5563;letter-spacing:0.093px;">ahrar.ahmad</span>
<span class="t" style="left:527.00px;top:390.00px;font-size:11.5px;line-height:16px;color:#4b5563;letter-spacing:-.1px;"><svg width="6.40" height="7.91" viewBox="0 0 6.40 7.91" style="display:inline-block;vertical-align:baseline;overflow:visible;"><path d="M2.89 7.91L2.89 0.97L1.11 2.24L1.11 1.29L2.98 0.00L3.91 0.00L3.91 7.91Z" fill="#4b5563"/></svg>3<svg width="6.40" height="7.91" viewBox="0 0 6.40 7.91" style="display:inline-block;vertical-align:baseline;overflow:visible;"><path d="M2.89 7.91L2.89 0.97L1.11 2.24L1.11 1.29L2.98 0.00L3.91 0.00L3.91 7.91Z" fill="#4b5563"/></svg></span>
<span class="t" style="left:684.50px;top:390.00px;font-size:11.5px;line-height:16px;color:#4b5563;letter-spacing:0.223px;">02/<svg width="6.40" height="7.91" viewBox="0 0 6.40 7.91" style="display:inline-block;vertical-align:baseline;overflow:visible;margin-right:0.223px;"><path d="M2.89 7.91L2.89 0.97L1.11 2.24L1.11 1.29L2.98 0.00L3.91 0.00L3.91 7.91Z" fill="#4b5563"/></svg>2/2026 <svg width="6.40" height="7.91" viewBox="0 0 6.40 7.91" style="display:inline-block;vertical-align:baseline;overflow:visible;margin-right:0.223px;"><path d="M2.89 7.91L2.89 0.97L1.11 2.24L1.11 1.29L2.98 0.00L3.91 0.00L3.91 7.91Z" fill="#4b5563"/></svg>0:52:59 AM</span>
<span class="t" style="left:843.70px;top:390.00px;font-size:11.5px;line-height:16px;color:#4b5563;">-</span>
<span class="t" style="left:997.80px;top:390.00px;font-size:11.5px;line-height:16px;color:#4b5563;">-</span>
<span class="t" style="left:1160.70px;top:390.00px;font-size:11.5px;line-height:16px;color:#4b5563;">-</span>
<span class="t" style="left:1328.50px;top:390.00px;font-size:11.5px;line-height:16px;color:#4b5563;letter-spacing:0.115px;">system</span>
<span class="t" style="left:1460.60px;top:390.00px;font-size:11.5px;line-height:16px;color:#4b5563;letter-spacing:.4px;">0<svg width="6.40" height="7.91" viewBox="0 0 6.40 7.91" style="display:inline-block;vertical-align:baseline;overflow:visible;"><path d="M2.89 7.91L2.89 0.97L1.11 2.24L1.11 1.29L2.98 0.00L3.91 0.00L3.91 7.91Z" fill="#4b5563"/></svg>/</span>
<div class="b" style="left:0.00px;top:519.00px;width:1473.60px;height:1.00px;background:#e7e8ea;"></div>
<div class="b" style="left:120.20px;top:469.00px;width:50.60px;height:18.00px;background:#f8f9fa;border-radius:7px;"></div>
<span class="t" style="left:127.60px;top:470.00px;font-size:10.1px;line-height:15px;color:#555b66;letter-spacing:0.114px;">Medium</span>
<span class="t" style="left:236.49px;top:470.00px;font-size:11.5px;line-height:16px;color:#4b5563;letter-spacing:0.210px;">jacob.gordon</span>
<span class="t" style="left:381.50px;top:470.00px;font-size:11.5px;line-height:16px;color:#4b5563;letter-spacing:0.093px;">ahrar.ahmad</span>
<span class="t" style="left:527.00px;top:470.00px;font-size:11.5px;line-height:16px;color:#4b5563;letter-spacing:-.1px;"><svg width="6.40" height="7.91" viewBox="0 0 6.40 7.91" style="display:inline-block;vertical-align:baseline;overflow:visible;"><path d="M2.89 7.91L2.89 0.97L1.11 2.24L1.11 1.29L2.98 0.00L3.91 0.00L3.91 7.91Z" fill="#4b5563"/></svg>3<svg width="6.40" height="7.91" viewBox="0 0 6.40 7.91" style="display:inline-block;vertical-align:baseline;overflow:visible;"><path d="M2.89 7.91L2.89 0.97L1.11 2.24L1.11 1.29L2.98 0.00L3.91 0.00L3.91 7.91Z" fill="#4b5563"/></svg></span>
<span class="t" style="left:684.50px;top:470.00px;font-size:11.5px;line-height:16px;color:#4b5563;letter-spacing:0.223px;">02/<svg width="6.40" height="7.91" viewBox="0 0 6.40 7.91" style="display:inline-block;vertical-align:baseline;overflow:visible;margin-right:0.223px;"><path d="M2.89 7.91L2.89 0.97L1.11 2.24L1.11 1.29L2.98 0.00L3.91 0.00L3.91 7.91Z" fill="#4b5563"/></svg>2/2026 <svg width="6.40" height="7.91" viewBox="0 0 6.40 7.91" style="display:inline-block;vertical-align:baseline;overflow:visible;margin-right:0.223px;"><path d="M2.89 7.91L2.89 0.97L1.11 2.24L1.11 1.29L2.98 0.00L3.91 0.00L3.91 7.91Z" fill="#4b5563"/></svg>0:52:59 AM</span>
<span class="t" style="left:843.70px;top:470.00px;font-size:11.5px;line-height:16px;color:#4b5563;">-</span>
<span class="t" style="left:997.80px;top:470.00px;font-size:11.5px;line-height:16px;color:#4b5563;">-</span>
<span class="t" style="left:1160.70px;top:470.00px;font-size:11.5px;line-height:16px;color:#4b5563;">-</span>
<span class="t" style="left:1328.50px;top:470.00px;font-size:11.5px;line-height:16px;color:#4b5563;letter-spacing:0.115px;">system</span>
<span class="t" style="left:1460.60px;top:470.00px;font-size:11.5px;line-height:16px;color:#4b5563;letter-spacing:.4px;">0<svg width="6.40" height="7.91" viewBox="0 0 6.40 7.91" style="display:inline-block;vertical-align:baseline;overflow:visible;"><path d="M2.89 7.91L2.89 0.97L1.11 2.24L1.11 1.29L2.98 0.00L3.91 0.00L3.91 7.91Z" fill="#4b5563"/></svg>/</span>
<div class="b" style="left:0.00px;top:599.00px;width:1473.60px;height:1.00px;background:#e7e8ea;"></div>
<div class="b" style="left:120.20px;top:550.00px;width:50.60px;height:18.00px;background:#f8f9fa;border-radius:7px;"></div>
<span class="t" style="left:127.60px;top:551.00px;font-size:10.1px;line-height:15px;color:#555b66;letter-spacing:0.114px;">Medium</span>
<span class="t" style="left:236.49px;top:551.00px;font-size:11.5px;line-height:16px;color:#4b5563;letter-spacing:0.210px;">jacob.gordon</span>
<span class="t" style="left:381.50px;top:551.00px;font-size:11.5px;line-height:16px;color:#4b5563;letter-spacing:0.093px;">ahrar.ahmad</span>
<span class="t" style="left:527.00px;top:551.00px;font-size:11.5px;line-height:16px;color:#4b5563;letter-spacing:-.1px;"><svg width="6.40" height="7.91" viewBox="0 0 6.40 7.91" style="display:inline-block;vertical-align:baseline;overflow:visible;"><path d="M2.89 7.91L2.89 0.97L1.11 2.24L1.11 1.29L2.98 0.00L3.91 0.00L3.91 7.91Z" fill="#4b5563"/></svg>3<svg width="6.40" height="7.91" viewBox="0 0 6.40 7.91" style="display:inline-block;vertical-align:baseline;overflow:visible;"><path d="M2.89 7.91L2.89 0.97L1.11 2.24L1.11 1.29L2.98 0.00L3.91 0.00L3.91 7.91Z" fill="#4b5563"/></svg></span>
<span class="t" style="left:684.50px;top:551.00px;font-size:11.5px;line-height:16px;color:#4b5563;letter-spacing:0.223px;">02/<svg width="6.40" height="7.91" viewBox="0 0 6.40 7.91" style="display:inline-block;vertical-align:baseline;overflow:visible;margin-right:0.223px;"><path d="M2.89 7.91L2.89 0.97L1.11 2.24L1.11 1.29L2.98 0.00L3.91 0.00L3.91 7.91Z" fill="#4b5563"/></svg>2/2026 <svg width="6.40" height="7.91" viewBox="0 0 6.40 7.91" style="display:inline-block;vertical-align:baseline;overflow:visible;margin-right:0.223px;"><path d="M2.89 7.91L2.89 0.97L1.11 2.24L1.11 1.29L2.98 0.00L3.91 0.00L3.91 7.91Z" fill="#4b5563"/></svg>0:52:59 AM</span>
<span class="t" style="left:843.70px;top:551.00px;font-size:11.5px;line-height:16px;color:#4b5563;">-</span>
<span class="t" style="left:997.80px;top:551.00px;font-size:11.5px;line-height:16px;color:#4b5563;">-</span>
<span class="t" style="left:1160.70px;top:551.00px;font-size:11.5px;line-height:16px;color:#4b5563;">-</span>
<span class="t" style="left:1328.50px;top:551.00px;font-size:11.5px;line-height:16px;color:#4b5563;letter-spacing:0.115px;">system</span>
<span class="t" style="left:1460.60px;top:551.00px;font-size:11.5px;line-height:16px;color:#4b5563;letter-spacing:.4px;">0<svg width="6.40" height="7.91" viewBox="0 0 6.40 7.91" style="display:inline-block;vertical-align:baseline;overflow:visible;"><path d="M2.89 7.91L2.89 0.97L1.11 2.24L1.11 1.29L2.98 0.00L3.91 0.00L3.91 7.91Z" fill="#4b5563"/></svg>/</span>
<div class="b" style="left:0.00px;top:679.00px;width:1473.60px;height:1.00px;background:#e7e8ea;"></div>
<div class="b" style="left:120.20px;top:630.00px;width:50.60px;height:18.00px;background:#f8f9fa;border-radius:7px;"></div>
<span class="t" style="left:127.60px;top:631.00px;font-size:10.1px;line-height:15px;color:#555b66;letter-spacing:0.114px;">Medium</span>
<span class="t" style="left:236.49px;top:631.00px;font-size:11.5px;line-height:16px;color:#4b5563;letter-spacing:0.210px;">jacob.gordon</span>
<span class="t" style="left:381.50px;top:631.00px;font-size:11.5px;line-height:16px;color:#4b5563;letter-spacing:0.093px;">ahrar.ahmad</span>
<span class="t" style="left:527.00px;top:631.00px;font-size:11.5px;line-height:16px;color:#4b5563;letter-spacing:-.1px;"><svg width="6.40" height="7.91" viewBox="0 0 6.40 7.91" style="display:inline-block;vertical-align:baseline;overflow:visible;"><path d="M2.89 7.91L2.89 0.97L1.11 2.24L1.11 1.29L2.98 0.00L3.91 0.00L3.91 7.91Z" fill="#4b5563"/></svg>3<svg width="6.40" height="7.91" viewBox="0 0 6.40 7.91" style="display:inline-block;vertical-align:baseline;overflow:visible;"><path d="M2.89 7.91L2.89 0.97L1.11 2.24L1.11 1.29L2.98 0.00L3.91 0.00L3.91 7.91Z" fill="#4b5563"/></svg></span>
<span class="t" style="left:684.50px;top:631.00px;font-size:11.5px;line-height:16px;color:#4b5563;letter-spacing:0.223px;">02/<svg width="6.40" height="7.91" viewBox="0 0 6.40 7.91" style="display:inline-block;vertical-align:baseline;overflow:visible;margin-right:0.223px;"><path d="M2.89 7.91L2.89 0.97L1.11 2.24L1.11 1.29L2.98 0.00L3.91 0.00L3.91 7.91Z" fill="#4b5563"/></svg>2/2026 <svg width="6.40" height="7.91" viewBox="0 0 6.40 7.91" style="display:inline-block;vertical-align:baseline;overflow:visible;margin-right:0.223px;"><path d="M2.89 7.91L2.89 0.97L1.11 2.24L1.11 1.29L2.98 0.00L3.91 0.00L3.91 7.91Z" fill="#4b5563"/></svg>0:52:59 AM</span>
<span class="t" style="left:843.70px;top:631.00px;font-size:11.5px;line-height:16px;color:#4b5563;">-</span>
<span class="t" style="left:997.80px;top:631.00px;font-size:11.5px;line-height:16px;color:#4b5563;">-</span>
<span class="t" style="left:1160.70px;top:631.00px;font-size:11.5px;line-height:16px;color:#4b5563;">-</span>
<span class="t" style="left:1328.50px;top:631.00px;font-size:11.5px;line-height:16px;color:#4b5563;letter-spacing:0.115px;">system</span>
<span class="t" style="left:1460.60px;top:631.00px;font-size:11.5px;line-height:16px;color:#4b5563;letter-spacing:.4px;">0<svg width="6.40" height="7.91" viewBox="0 0 6.40 7.91" style="display:inline-block;vertical-align:baseline;overflow:visible;"><path d="M2.89 7.91L2.89 0.97L1.11 2.24L1.11 1.29L2.98 0.00L3.91 0.00L3.91 7.91Z" fill="#4b5563"/></svg>/</span>
<div class="b" style="left:0.00px;top:680.00px;width:1473.60px;height:58.00px;background:#f5f6f8;"></div>
<div class="b" style="left:0.00px;top:738.00px;width:1473.60px;height:1.00px;background:#e7e8ea;"></div>
<span class="t" style="left:127.30px;top:701.00px;font-size:10.1px;line-height:15px;color:#1e3a5f;font-weight:700;letter-spacing:-0.111px;">Medium</span>
<span class="t" style="left:236.20px;top:701.00px;font-size:11.3px;line-height:16px;color:#1e3a5f;font-weight:700;letter-spacing:0.050px;">muneesh.dasari</span>
<span class="t" style="left:381.50px;top:701.00px;font-size:11.3px;line-height:16px;color:#1e3a5f;font-weight:700;letter-spacing:0.050px;">muneesh.dasari</span>
<span class="t" style="left:527.80px;top:701.00px;font-size:11.3px;line-height:16px;color:#1e3a5f;font-weight:700;letter-spacing:-.1px;"><svg width="6.28" height="7.77" viewBox="0 0 6.28 7.77" style="display:inline-block;vertical-align:baseline;overflow:visible;"><path d="M2.64 7.77L2.64 1.32L0.77 2.48L0.77 1.26L2.72 0.00L4.19 0.00L4.19 7.77Z" fill="#1e3a5f"/></svg>25</span>
<span class="t" style="left:684.50px;top:701.00px;font-size:11.5px;line-height:16px;color:#4b5563;letter-spacing:0.385px;">02/08/2026 09:36:<svg width="6.40" height="7.91" viewBox="0 0 6.40 7.91" style="display:inline-block;vertical-align:baseline;overflow:visible;margin-right:0.385px;"><path d="M2.89 7.91L2.89 0.97L1.11 2.24L1.11 1.29L2.98 0.00L3.91 0.00L3.91 7.91Z" fill="#4b5563"/></svg>3 AM</span>
<span class="t" style="left:843.70px;top:701.00px;font-size:11.5px;line-height:16px;color:#4b5563;">-</span>
<span class="t" style="left:997.80px;top:701.00px;font-size:11.5px;line-height:16px;color:#1e3a5f;font-weight:700;">-</span>
<span class="t" style="left:1160.70px;top:701.00px;font-size:11.5px;line-height:16px;color:#4b5563;">-</span>
<span class="t" style="left:1328.10px;top:701.00px;font-size:11.3px;line-height:16px;color:#1e3a5f;font-weight:700;letter-spacing:-0.011px;">system</span>
<span class="t" style="left:1460.60px;top:701.00px;font-size:11.5px;line-height:16px;color:#4b5563;letter-spacing:.4px;">0<svg width="6.40" height="7.91" viewBox="0 0 6.40 7.91" style="display:inline-block;vertical-align:baseline;overflow:visible;"><path d="M2.89 7.91L2.89 0.97L1.11 2.24L1.11 1.29L2.98 0.00L3.91 0.00L3.91 7.91Z" fill="#4b5563"/></svg>/</span>
<div class="b" style="left:0.00px;top:739.00px;width:1473.60px;height:59.00px;background:#f5f6f8;"></div>
<span class="t" style="left:127.30px;top:760.00px;font-size:10.1px;line-height:15px;color:#1e3a5f;font-weight:700;letter-spacing:-0.111px;">Medium</span>
<span class="t" style="left:236.20px;top:760.00px;font-size:11.3px;line-height:16px;color:#1e3a5f;font-weight:700;letter-spacing:0.050px;">muneesh.dasari</span>
<span class="t" style="left:381.50px;top:760.00px;font-size:11.3px;line-height:16px;color:#1e3a5f;font-weight:700;letter-spacing:0.050px;">muneesh.dasari</span>
<span class="t" style="left:527.80px;top:760.00px;font-size:11.3px;line-height:16px;color:#1e3a5f;font-weight:700;letter-spacing:-.1px;"><svg width="6.28" height="7.77" viewBox="0 0 6.28 7.77" style="display:inline-block;vertical-align:baseline;overflow:visible;"><path d="M2.64 7.77L2.64 1.32L0.77 2.48L0.77 1.26L2.72 0.00L4.19 0.00L4.19 7.77Z" fill="#1e3a5f"/></svg>25</span>
<span class="t" style="left:684.50px;top:760.00px;font-size:11.5px;line-height:16px;color:#4b5563;letter-spacing:0.385px;">02/08/2026 09:36:<svg width="6.40" height="7.91" viewBox="0 0 6.40 7.91" style="display:inline-block;vertical-align:baseline;overflow:visible;margin-right:0.385px;"><path d="M2.89 7.91L2.89 0.97L1.11 2.24L1.11 1.29L2.98 0.00L3.91 0.00L3.91 7.91Z" fill="#4b5563"/></svg>3 AM</span>
<span class="t" style="left:843.70px;top:760.00px;font-size:11.5px;line-height:16px;color:#4b5563;">-</span>
<span class="t" style="left:997.80px;top:760.00px;font-size:11.5px;line-height:16px;color:#1e3a5f;font-weight:700;">-</span>
<span class="t" style="left:1160.70px;top:760.00px;font-size:11.5px;line-height:16px;color:#4b5563;">-</span>
<span class="t" style="left:1328.10px;top:760.00px;font-size:11.3px;line-height:16px;color:#1e3a5f;font-weight:700;letter-spacing:-0.011px;">system</span>
<span class="t" style="left:1460.60px;top:760.00px;font-size:11.5px;line-height:16px;color:#4b5563;letter-spacing:.4px;">0<svg width="6.40" height="7.91" viewBox="0 0 6.40 7.91" style="display:inline-block;vertical-align:baseline;overflow:visible;"><path d="M2.89 7.91L2.89 0.97L1.11 2.24L1.11 1.29L2.98 0.00L3.91 0.00L3.91 7.91Z" fill="#4b5563"/></svg>/</span>
<div class="b" style="left:1471.60px;top:35.80px;width:1.00px;height:901.80px;background:#e6e6e7;"></div>
</div>
<div class="b" style="left:659.60px;top:1149.20px;width:588.00px;height:44.00px;background:#fff;border:1px solid #e7e7e8;border-radius:22px;box-shadow:0 4px 10px rgba(0,0,0,.08);"></div>
<span class="t" style="left:686.30px;top:1161.00px;font-size:11.4px;line-height:16px;color:#1f2937;letter-spacing:-0.588px;-webkit-text-stroke:0.12px #1f2937;"><svg width="6.34" height="7.84" viewBox="0 0 6.34 7.84" style="display:inline-block;vertical-align:baseline;overflow:visible;margin-right:-0.588px;"><path d="M2.87 7.84L2.87 0.96L1.10 2.22L1.10 1.27L2.95 0.00L3.87 0.00L3.87 7.84Z" fill="#1f2937" stroke="#1f2937" stroke-width="0.12"/></svg>–<svg width="6.34" height="7.84" viewBox="0 0 6.34 7.84" style="display:inline-block;vertical-align:baseline;overflow:visible;margin-right:-0.588px;"><path d="M2.87 7.84L2.87 0.96L1.10 2.22L1.10 1.27L2.95 0.00L3.87 0.00L3.87 7.84Z" fill="#1f2937" stroke="#1f2937" stroke-width="0.12"/></svg>0</span>
<span class="t" style="left:713.60px;top:1161.00px;font-size:11.4px;line-height:16px;color:#64748b;letter-spacing:0.081px;">of</span>
<span class="t" style="left:726.30px;top:1161.00px;font-size:11.4px;line-height:16px;color:#1f2937;letter-spacing:0.278px;-webkit-text-stroke:0.12px #1f2937;">2399</span>
<svg class="i" style="left:763.90px;top:1163.50px;" width="12" height="12" viewBox="0 0 24 24" fill="none" stroke="#8d96a5" stroke-width="2" stroke-linecap="round" stroke-linejoin="round"><path d="m15 18-6-6 6-6"/></svg>
<div class="b" style="left:788.00px;top:1156.20px;width:25.80px;height:25.50px;background:#17375e;border-radius:6.5px;"></div>
<span class="t" style="left:800.80px;top:1161.00px;font-size:11.4px;line-height:16px;color:#fff;transform:translateX(-50%);"><svg width="6.34" height="7.84" viewBox="0 0 6.34 7.84" style="display:inline-block;vertical-align:baseline;overflow:visible;"><path d="M2.87 7.84L2.87 0.96L1.10 2.22L1.10 1.27L2.95 0.00L3.87 0.00L3.87 7.84Z" fill="#fff"/></svg></span>
<span class="t" style="left:829.70px;top:1161.00px;font-size:11.4px;line-height:16px;color:#1f2937;transform:translateX(-50%);-webkit-text-stroke:0.12px #1f2937;">2</span>
<span class="t" style="left:858.30px;top:1161.00px;font-size:11.4px;line-height:16px;color:#1f2937;transform:translateX(-50%);-webkit-text-stroke:0.12px #1f2937;">3</span>
<div class="b" style="left:882.90px;top:1168.70px;width:2.00px;height:2.00px;background:#1f2937;border-radius:50%;"></div>
<div class="b" style="left:886.20px;top:1168.70px;width:2.00px;height:2.00px;background:#1f2937;border-radius:50%;"></div>
<div class="b" style="left:889.50px;top:1168.70px;width:2.00px;height:2.00px;background:#1f2937;border-radius:50%;"></div>
<span class="t" style="left:905.80px;top:1161.00px;font-size:11.4px;line-height:16px;color:#1f2937;letter-spacing:0.495px;-webkit-text-stroke:0.12px #1f2937;">240</span>
<svg class="i" style="left:942.50px;top:1163.50px;" width="12" height="12" viewBox="0 0 24 24" fill="none" stroke="#111827" stroke-width="2.15" stroke-linecap="round" stroke-linejoin="round"><path d="m9 18 6-6-6-6"/></svg>
<span class="t" style="left:965.00px;top:1161.00px;font-size:11.4px;line-height:16px;color:#1f2937;letter-spacing:-0.153px;-webkit-text-stroke:0.12px #1f2937;">Go to:</span>
<div class="b" style="left:1002.50px;top:1156.20px;width:62.80px;height:25.50px;background:#fff;border:1px solid #e7e7e8;border-radius:6.5px;"></div>
<span class="t" style="left:1012.80px;top:1161.00px;font-size:11.4px;line-height:16px;color:#8793a5;letter-spacing:0.136px;"><svg width="6.34" height="7.84" viewBox="0 0 6.34 7.84" style="display:inline-block;vertical-align:baseline;overflow:visible;margin-right:0.136px;"><path d="M2.87 7.84L2.87 0.96L1.10 2.22L1.10 1.27L2.95 0.00L3.87 0.00L3.87 7.84Z" fill="#8793a5"/></svg>-240</span>
<div class="b" style="left:1073.00px;top:1156.20px;width:34.00px;height:25.50px;background:#9fabbb;border-radius:6.5px;"></div>
<span class="t" style="left:1082.50px;top:1161.00px;font-size:11.4px;line-height:16px;color:#fff;letter-spacing:-0.519px;">Go</span>
<div class="b" style="left:1120.20px;top:1161.20px;width:1.00px;height:15.50px;background:#e2e5e9;"></div>
<span class="t" style="left:1133.70px;top:1161.00px;font-size:11.4px;line-height:16px;color:#6b7280;letter-spacing:-0.091px;">Rows:</span>
<div class="b" style="left:1172.20px;top:1156.20px;width:50.30px;height:25.50px;background:#f9fafb;border:1px solid #e7e7e8;border-radius:6.5px;"></div>
<span class="t" style="left:1180.80px;top:1161.00px;font-size:11.4px;line-height:16px;color:#111827;letter-spacing:-1.282px;"><svg width="6.34" height="7.84" viewBox="0 0 6.34 7.84" style="display:inline-block;vertical-align:baseline;overflow:visible;margin-right:-1.282px;"><path d="M2.87 7.84L2.87 0.96L1.10 2.22L1.10 1.27L2.95 0.00L3.87 0.00L3.87 7.84Z" fill="#111827"/></svg>0</span>
<svg class="i" style="left:1201.60px;top:1163.60px;" width="12" height="12" viewBox="0 0 24 24" fill="none" stroke="#111827" stroke-width="2.2" stroke-linecap="round" stroke-linejoin="round"><path d="m6 9 6 6 6-6"/></svg>
</body></html>
